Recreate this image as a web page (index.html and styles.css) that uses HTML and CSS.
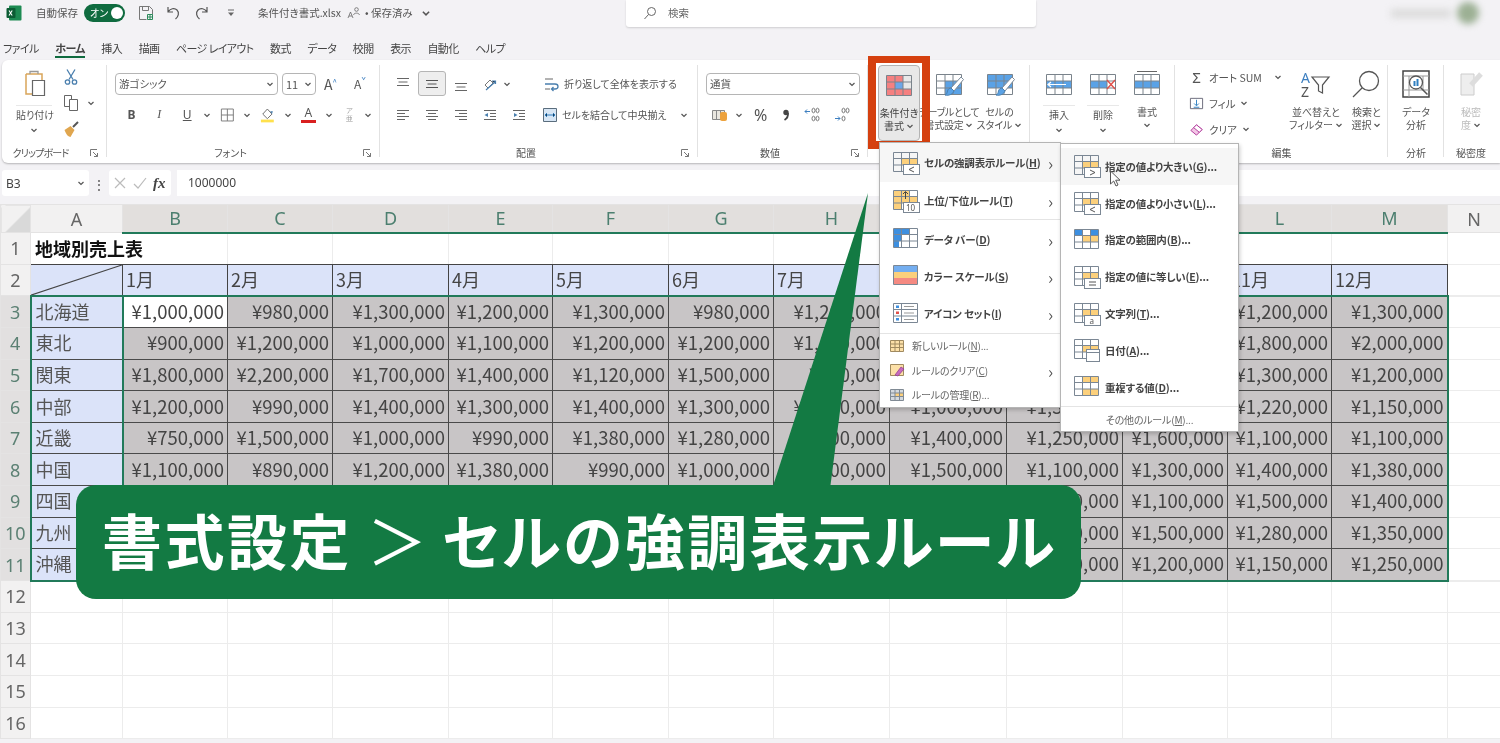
FILE: index.html
```html
<!DOCTYPE html>
<html lang="ja">
<head>
    <meta charset="UTF-8">
    <title>条件付き書式.xlsx - Excel</title>
    <link rel="stylesheet" href="styles.css">
</head>
<body>
<svg class="defs" width="0" height="0">
    <symbol id="mgrid" viewBox="0 0 28 24">
        <path fill="#fcd07c" d="M9 7h17v7H9z"/>
        <path fill="none" stroke="#7b8794" d="M1.500 1.500h24v19h-24zM1.500 7.500h24M1.500 14h24M9.500 1.500v19M17.500 1.500v19"/>
    </symbol>
    <symbol id="sgrid" viewBox="0 0 32 32">
        <path fill="none" stroke="#7a838b" d="M3.500 6.500h25v20h-25zM3.500 13h25M3.500 20h25M12 6.500v20M20 6.500v20"/>
    </symbol>
    <symbol id="brush" viewBox="0 0 32 32">
        <path fill="#fff" stroke="#7a8a9a" d="M18 20L28 9l2.500 2.500L21 23z"/>
        <path fill="#5aa2e6" stroke="#4a7fae" d="M18 20l3 3c-1 3-5 5-9 4 2-1 2-2 2.500-4 .5-2 2-3 3.500-3z"/>
    </symbol>
    <symbol id="chev" viewBox="0 0 8 8">
        <path fill="none" stroke="#555" stroke-width="1.200" d="M1.500 3l2.500 2.500L6.500 3"/>
    </symbol>
    <symbol id="launch" viewBox="0 0 10 10">
        <path fill="none" stroke="#777" d="M1.500 8V1.500H8M4 4l4.500 4.500M5 8.500h3.500V5"/>
    </symbol>
</svg>
<div class="page">
    <!-- Title bar -->
    <div class="titlebar">
        <div class="title-left">
            <svg class="xl-logo" width="16" height="16" viewBox="0 0 16 16"><rect x="3" y="0.500" width="12.500" height="15" rx="1" fill="#1d8a52"/><rect x="0.500" y="3" width="9" height="10" rx="1" fill="#0c5c34"/><path d="M3 5.500l3.200 5M6.200 5.500L3 10.500" stroke="#fff" stroke-width="1.100"/></svg>
            <span class="autosave">自動保存</span>
            <span class="toggle">オン<i class="knob"></i></span>
            <svg class="qat save" width="16" height="16" viewBox="0 0 16 16"><path fill="none" stroke="#777" d="M1.500 1.500h10l3 3v5M1.500 1.500v13h7M4.500 1.500v4h6v-4"/><path fill="none" stroke="#2a8a5a" d="M9.500 9.500h5v5h-5zM12 9.500v5M9.500 12h5"/></svg>
            <svg class="qat undo" width="16" height="16" viewBox="0 0 16 16"><path fill="none" stroke="#555" stroke-width="1.200" d="M3 2v5h5M3.200 6.800C5 3.500 9.500 2.500 12 5c2.500 2.600 1.500 6.500-1.500 9"/></svg>
            <svg class="qat redo" width="16" height="16" viewBox="0 0 16 16"><path fill="none" stroke="#555" stroke-width="1.200" d="M13 2v5H8M12.800 6.800C11 3.500 6.500 2.500 4 5c-2.500 2.600-1.500 6.500 1.500 9"/></svg>
            <svg class="qat more" width="10" height="10" viewBox="0 0 10 10"><path fill="none" stroke="#666" d="M2 2h6"/><path fill="#666" d="M2 4.500h6L5 8z"/></svg>
            <span class="filename">条件付き書式.xlsx</span>
            <svg class="author" width="14" height="14" viewBox="0 0 14 14"><circle cx="9.500" cy="3.500" r="1.800" fill="none" stroke="#666" stroke-width=".8"/><path fill="none" stroke="#666" stroke-width=".8" d="M6.500 9c.5-2.500 5.500-2.500 6 0M1 12l2.500-6L6 12M2 10h3"/></svg>
            <span class="saved">• 保存済み</span>
            <svg class="saved-chev" width="10" height="10" viewBox="0 0 8 8"><use href="#chev"/></svg>
        </div>
        <div class="searchbox">
            <svg width="14" height="14" viewBox="0 0 14 14"><circle cx="8.500" cy="5.500" r="4" fill="none" stroke="#666"/><path stroke="#666" d="M5.500 8.500L1.500 13"/></svg>
            <span>検索</span>
        </div>
        <div class="account"><span class="acc-name"></span><span class="acc-pic"></span></div>
    </div>

    <!-- Tabs -->
    <div class="tabs">
        <span>ファイル</span>
        <span class="tab-on">ホーム</span>
        <span>挿入</span>
        <span>描画</span>
        <span>ページ レイアウト</span>
        <span>数式</span>
        <span>データ</span>
        <span>校閲</span>
        <span>表示</span>
        <span>自動化</span>
        <span>ヘルプ</span>
    </div>

    <!-- Ribbon -->
    <div class="ribbon">
        <section class="group g-clip">
            <div class="group-body">
                <div class="big paste">
                    <svg width="32" height="32" viewBox="0 0 32 32"><path fill="none" stroke="#d9a55a" stroke-width="1.500" d="M8 6h16v6M8 6v20h6"/><path fill="none" stroke="#999" stroke-width="1.300" d="M12 6V3.500h8V6"/><path fill="#fff" stroke="#666" stroke-width="1.200" d="M14.500 12.500h12v15h-12z"/></svg>
                    <span class="split">貼り付け</span>
                    <svg class="chev" viewBox="0 0 8 8"><use href="#chev"/></svg>
                </div>
                <div class="clip-tools">
                    <svg width="16" height="18" viewBox="0 0 16 18"><path fill="none" stroke="#4a7fae" stroke-width="1.300" d="M4 1.500l6 10M12 1.500l-6 10"/><circle cx="4.500" cy="14" r="2.200" fill="none" stroke="#4a7fae" stroke-width="1.300"/><circle cx="11.500" cy="14" r="2.200" fill="none" stroke="#4a7fae" stroke-width="1.300"/></svg>
                    <div class="row-chev">
                        <svg width="16" height="18" viewBox="0 0 16 18"><path fill="none" stroke="#666" d="M1.500 1.500h7v11h-7z"/><path fill="#fff" stroke="#666" d="M6.500 5.500h8v11h-8z"/></svg>
                        <svg class="chev" viewBox="0 0 8 8"><use href="#chev"/></svg>
                    </div>
                    <svg width="18" height="18" viewBox="0 0 18 18"><path fill="#e0a64f" d="M1.500 10l6-4 4 4-4 7c-2-.5-4-1.500-6-7z"/><path stroke="#555" stroke-width="2" d="M10 7l5-5"/></svg>
                </div>
            </div>
            <div class="group-label">クリップボード<svg class="launch" viewBox="0 0 10 10"><use href="#launch"/></svg></div>
        </section>

        <section class="group g-font">
            <div class="group-body rows">
                <div class="tool-row">
                    <div class="select font-name">游ゴシック<svg class="chev" viewBox="0 0 8 8"><use href="#chev"/></svg></div>
                    <div class="select font-size">11<svg class="chev" viewBox="0 0 8 8"><use href="#chev"/></svg></div>
                    <span class="grow">A<sup>^</sup></span>
                    <span class="shrink">A<sup>ˇ</sup></span>
                </div>
                <div class="tool-row fmt">
                    <b class="f-b">B</b>
                    <i class="f-i">I</i>
                    <u class="f-u">U</u>
                    <svg class="chev" viewBox="0 0 8 8"><use href="#chev"/></svg>
                    <svg width="16" height="16" viewBox="0 0 16 16"><path fill="none" stroke="#777" d="M1.500 1.500h13v13h-13zM8 1.500v13M1.500 8h13"/></svg>
                    <svg class="chev" viewBox="0 0 8 8"><use href="#chev"/></svg>
                    <svg width="16" height="16" viewBox="0 0 16 16"><path fill="#fff" stroke="#666" d="M8 1.500L13 7l-5 5-5-5z"/><path fill="#4a7fae" d="M11 4h3l-1 3z"/><path fill="#ffe14d" d="M1 13h14v3H1z"/></svg>
                    <svg class="chev" viewBox="0 0 8 8"><use href="#chev"/></svg>
                    <span class="f-color">A</span>
                    <svg class="chev" viewBox="0 0 8 8"><use href="#chev"/></svg>
                    <span class="f-furi">ア<br>亜</span>
                    <svg class="chev" viewBox="0 0 8 8"><use href="#chev"/></svg>
                </div>
            </div>
            <div class="group-label">フォント<svg class="launch" viewBox="0 0 10 10"><use href="#launch"/></svg></div>
        </section>

        <section class="group g-align">
            <div class="group-body rows">
                <div class="tool-row">
                    <svg class="line-ic" viewBox="0 0 16 16"><path stroke="#666" d="M2 2.500h12M3.500 6h9M2 9.500h12"/></svg>
                    <span class="line-on"><svg class="line-ic" viewBox="0 0 16 16"><path stroke="#555" d="M2 4.500h12M3.500 8h9M2 11.500h12"/></svg></span>
                    <svg class="line-ic" viewBox="0 0 16 16"><path stroke="#666" d="M2 7.500h12M3.500 11h9M2 14.500h12"/></svg>
                    <svg class="line-ic orient" viewBox="0 0 16 16"><path fill="none" stroke="#777" d="M3 9l5-5 3 3-5 5z"/><path stroke="#4a7fae" stroke-width="1.200" d="M4 14l9-8M10 5h3.500v3"/></svg>
                    <svg class="chev" viewBox="0 0 8 8"><use href="#chev"/></svg>
                    <svg class="wrap-ic" width="16" height="16" viewBox="0 0 16 16"><path fill="none" stroke="#666" d="M1 3h8M1 13h5"/><path fill="none" stroke="#4a7fae" stroke-width="1.300" d="M1 8h10c4 0 4 5 0 5H8M9.500 11L7.500 13l2 2"/></svg>
                    <span class="al-text">折り返して全体を表示する</span>
                </div>
                <div class="tool-row">
                    <svg class="line-ic" viewBox="0 0 16 16"><path stroke="#666" d="M2 3.500h12M2 6.500h8M2 9.500h12M2 12.500h8"/></svg>
                    <svg class="line-ic" viewBox="0 0 16 16"><path stroke="#666" d="M2 3.500h12M4 6.500h8M2 9.500h12M4 12.500h8"/></svg>
                    <svg class="line-ic" viewBox="0 0 16 16"><path stroke="#666" d="M2 3.500h12M6 6.500h8M2 9.500h12M6 12.500h8"/></svg>
                    <svg class="line-ic" viewBox="0 0 16 16"><path stroke="#666" d="M2 3.500h12M8 6.500h6M8 9.500h6M2 12.500h12"/><path fill="#4a7fae" d="M6 6v4L2.500 8z"/></svg>
                    <svg class="line-ic" viewBox="0 0 16 16"><path stroke="#666" d="M2 3.500h12M8 6.500h6M8 9.500h6M2 12.500h12"/><path fill="#4a7fae" d="M3 6v4l3.500-2z"/></svg>
                    <svg class="wrap-ic merge" width="16" height="16" viewBox="0 0 16 16"><path fill="#d7e6f5" stroke="#5a6d7d" d="M1.500 1.500h13v13h-13z"/><path stroke="#2f7fc0" d="M3 8h10M5 6L3 8l2 2M11 6l2 2-2 2"/></svg>
                    <span class="al-text">セルを結合して中央揃え</span>
                    <svg class="chev merge-chev" viewBox="0 0 8 8"><use href="#chev"/></svg>
                </div>
            </div>
            <div class="group-label">配置<svg class="launch" viewBox="0 0 10 10"><use href="#launch"/></svg></div>
        </section>

        <section class="group g-num">
            <div class="group-body rows">
                <div class="tool-row">
                    <div class="select num-format">通貨<svg class="chev" viewBox="0 0 8 8"><use href="#chev"/></svg></div>
                </div>
                <div class="tool-row num-tools">
                    <svg width="18" height="16" viewBox="0 0 18 16"><path fill="#e9e6df" stroke="#888" d="M1.500 3.500h12v9h-12z"/><path stroke="#888" d="M5.500 3.500v9M9.500 3.500v9"/><rect x="9" y="5" width="7" height="9" rx="2" fill="#eda23d"/></svg>
                    <svg class="chev" viewBox="0 0 8 8"><use href="#chev"/></svg>
                    <span class="pct">%</span>
                    <svg class="comma" width="10" height="14" viewBox="0 0 10 14"><circle cx="5" cy="4.500" r="2.700" fill="#444"/><path fill="none" stroke="#444" stroke-width="1.800" d="M7 5c.3 3-1 5.500-3.500 7"/></svg>
                    <svg class="dec" width="17" height="16" viewBox="0 0 17 16"><path fill="none" stroke="#3d7fc0" d="M6 4.500H1M3 2.500l-2 2 2 2"/><ellipse cx="9.500" cy="3.500" rx="1.500" ry="2.300" fill="none" stroke="#777"/><ellipse cx="13.500" cy="3.500" rx="1.500" ry="2.300" fill="none" stroke="#777"/><ellipse cx="9.500" cy="11.500" rx="1.500" ry="2.300" fill="none" stroke="#777"/><ellipse cx="13.500" cy="11.500" rx="1.500" ry="2.300" fill="none" stroke="#777"/></svg>
                    <svg class="dec" width="17" height="16" viewBox="0 0 17 16"><ellipse cx="9.500" cy="3.500" rx="1.500" ry="2.300" fill="none" stroke="#777"/><ellipse cx="13.500" cy="3.500" rx="1.500" ry="2.300" fill="none" stroke="#777"/><ellipse cx="9.500" cy="11.500" rx="1.500" ry="2.300" fill="none" stroke="#777"/><path fill="none" stroke="#3d7fc0" d="M1 11.500h5M4 9.500l2 2-2 2"/></svg>
                </div>
            </div>
            <div class="group-label">数値<svg class="launch" viewBox="0 0 10 10"><use href="#launch"/></svg></div>
        </section>

        <section class="group g-style">
            <div class="group-body">
                <div class="big cond">
                    <svg width="32" height="32" viewBox="0 0 32 32"><path fill="#f58080" d="M3.500 6.500H20V13H3.500zM3.500 20h25v6.500h-25zM3.500 13H12v7H3.500z"/><path fill="#6da6e8" d="M12 13h8v7h-8z"/><use href="#sgrid" width="32" height="32"/></svg>
                    <span>条件付き</span>
                    <span>書式<svg class="chev" viewBox="0 0 8 8"><use href="#chev"/></svg></span>
                </div>
                <div class="big tbl">
                    <svg width="32" height="32" viewBox="0 0 32 32"><path fill="#5aa2e6" d="M12 13h16.500v13.500H12z"/><use href="#sgrid" width="32" height="32"/><use href="#brush" width="32" height="32"/></svg>
                    <span>テーブルとして</span>
                    <span>書式設定<svg class="chev" viewBox="0 0 8 8"><use href="#chev"/></svg></span>
                </div>
                <div class="big cstyle">
                    <svg width="32" height="32" viewBox="0 0 32 32"><path fill="#5aa2e6" d="M3.500 6.500h25V20h-25z"/><use href="#sgrid" width="32" height="32"/><use href="#brush" width="32" height="32"/></svg>
                    <span>セルの</span>
                    <span>スタイル<svg class="chev" viewBox="0 0 8 8"><use href="#chev"/></svg></span>
                </div>
            </div>
            <div class="group-label"></div>
        </section>

        <section class="group g-cell">
            <div class="group-body">
                <div class="big low">
                    <svg width="32" height="32" viewBox="0 0 32 32"><path fill="#5aa2e6" d="M3.500 13h25v7h-25z"/><use href="#sgrid" width="32" height="32"/><path fill="none" stroke="#fff" stroke-width="1.200" d="M5 16.500h18M8 14l-3 2.500L8 19"/></svg>
                    <span class="split">挿入</span>
                    <svg class="chev" viewBox="0 0 8 8"><use href="#chev"/></svg>
                </div>
                <div class="big low">
                    <svg width="32" height="32" viewBox="0 0 32 32"><path fill="#5aa2e6" d="M3.500 13H20v7H3.500z"/><use href="#sgrid" width="32" height="32"/><path fill="none" stroke="#e0504a" stroke-width="1.400" d="M20 12l8 9M28 12l-8 9"/></svg>
                    <span class="split">削除</span>
                    <svg class="chev" viewBox="0 0 8 8"><use href="#chev"/></svg>
                </div>
                <div class="big">
                    <svg width="32" height="32" viewBox="0 0 32 32"><path fill="#5aa2e6" d="M3.500 13h25v7h-25z"/><use href="#sgrid" width="32" height="32"/><path stroke="#666" d="M6 3.500h20"/></svg>
                    <span>書式</span>
                    <svg class="chev" viewBox="0 0 8 8"><use href="#chev"/></svg>
                </div>
            </div>
            <div class="group-label"></div>
        </section>

        <section class="group g-edit">
            <div class="group-body">
                <div class="edit-list">
                    <div class="edit-row"><span class="edit-ic sigma">Σ</span>オート SUM<svg class="chev sum-chev" viewBox="0 0 8 8"><use href="#chev"/></svg></div>
                    <div class="edit-row"><svg class="edit-ic" viewBox="0 0 16 16"><path fill="#fff" stroke="#667" d="M1.500 2.500h13v11h-13z"/><path stroke="#2f7fc0" fill="none" d="M8 4v6M5.500 8L8 10.500 10.500 8M5 12h6"/></svg>フィル<svg class="chev" viewBox="0 0 8 8"><use href="#chev"/></svg></div>
                    <div class="edit-row"><svg class="edit-ic" viewBox="0 0 16 16"><path fill="#f3c6e6" stroke="#b0389a" d="M2 9l6-6 6 5-6 6z"/><path fill="#fff" stroke="#b0389a" d="M8 3l6 5-3 3-6-5z"/></svg>クリア<svg class="chev" viewBox="0 0 8 8"><use href="#chev"/></svg></div>
                </div>
                <div class="big sort">
                    <svg width="32" height="32" viewBox="0 0 32 32"><text x="1" y="15" class="az az-a">A</text><text x="1" y="29" class="az">Z</text><path fill="none" stroke="#555" stroke-width="1.200" d="M12 9h17l-6.500 8v8l-4-2v-6z"/></svg>
                    <span>並べ替えと</span>
                    <span>フィルター<svg class="chev" viewBox="0 0 8 8"><use href="#chev"/></svg></span>
                </div>
                <div class="big find">
                    <svg width="32" height="32" viewBox="0 0 32 32"><circle cx="19" cy="13" r="9.500" fill="none" stroke="#555" stroke-width="1.300"/><path stroke="#555" stroke-width="1.300" d="M12 20L3 29"/></svg>
                    <span>検索と</span>
                    <span>選択<svg class="chev" viewBox="0 0 8 8"><use href="#chev"/></svg></span>
                </div>
            </div>
            <div class="group-label">編集</div>
        </section>

        <section class="group g-ana">
            <div class="group-body">
                <div class="big">
                    <svg width="32" height="32" viewBox="0 0 32 32"><path fill="none" stroke="#444" stroke-width="1.500" d="M3 3h26v26H3z"/><path fill="none" stroke="#999" d="M3 8h26M3 22h26M9 8v21M23 8v14"/><circle cx="16" cy="14.500" r="6.500" fill="#fff" stroke="#555" stroke-width="1.300"/><path fill="#2f7fc0" d="M13.500 13h2v5h-2zM16.500 11h2v7h-2z"/><path stroke="#555" stroke-width="1.500" d="M20.500 19.500l7 7"/></svg>
                    <span>データ</span>
                    <span>分析</span>
                </div>
            </div>
            <div class="group-label">分析</div>
        </section>

        <section class="group g-sec">
            <div class="group-body">
                <div class="big off">
                    <svg width="32" height="32" viewBox="0 0 32 32"><path fill="#eee" stroke="#ccc" d="M6 6h13v21H6z"/><path stroke="#ddd" stroke-width="5" d="M16 17l10-11"/></svg>
                    <span>秘密</span>
                    <span>度<svg class="chev" viewBox="0 0 8 8"><use href="#chev"/></svg></span>
                </div>
            </div>
            <div class="group-label">秘密度</div>
        </section>
    </div>

    <!-- Formula bar -->
    <div class="formula">
        <div class="namebox">B3<svg class="chev" viewBox="0 0 8 8"><use href="#chev"/></svg></div>
        <span class="dots">⋮</span>
        <div class="fx-box">
            <svg width="14" height="14" viewBox="0 0 14 14"><path stroke="#bbb" stroke-width="1.200" d="M2 2l10 10M12 2L2 12"/></svg>
            <svg width="14" height="14" viewBox="0 0 14 14"><path fill="none" stroke="#bbb" stroke-width="1.200" d="M1 8l4 4 8-10"/></svg>
            <i class="fx">fx</i>
        </div>
        <div class="fx-input">1000000</div>
    </div>

    <!-- Sheet -->
    <div class="sheet">
        <table>
            <colgroup>
                <col class="c30"><col class="c92"><col class="c105"><col class="c105"><col class="c116"><col class="c104"><col class="c116"><col class="c105"><col class="c116"><col class="c117"><col class="c116"><col class="c105"><col class="c104"><col class="c116"><col class="c53">
            </colgroup>
            <tr class="head">
                <th class="corner"></th><th>A</th><th class="hs">B</th><th class="hs">C</th><th class="hs">D</th><th class="hs">E</th><th class="hs">F</th><th class="hs">G</th><th class="hs">H</th><th class="hs">I</th><th class="hs">J</th><th class="hs">K</th><th class="hs">L</th><th class="hs">M</th><th>N</th>
            </tr>
            <tr class="row1">
                <th>1</th><td class="title" colspan="2">地域別売上表</td><td></td><td></td><td></td><td></td><td></td><td></td><td></td><td></td><td></td><td></td><td></td><td class="plain"></td>
            </tr>
            <tr class="months">
                <th>2</th><td class="diag"><svg width="92" height="32" preserveAspectRatio="none" viewBox="0 0 92 32"><path stroke="#444" stroke-width="1.200" d="M0 32L92 0"/></svg></td><td>1月</td><td>2月</td><td>3月</td><td>4月</td><td>5月</td><td>6月</td><td>7月</td><td></td><td></td><td></td><td>11月</td><td>12月</td><td class="plain"></td>
            </tr>
            <tr class="data first">
                <th>3</th><td class="area">北海道</td><td class="active">¥1,000,000</td><td>¥980,000</td><td>¥1,300,000</td><td>¥1,200,000</td><td>¥1,300,000</td><td>¥980,000</td><td>¥1,200,000</td><td></td><td></td><td></td><td>¥1,200,000</td><td>¥1,300,000</td><td class="plain"></td>
            </tr>
            <tr class="data">
                <th>4</th><td class="area">東北</td><td>¥900,000</td><td>¥1,200,000</td><td>¥1,000,000</td><td>¥1,100,000</td><td>¥1,200,000</td><td>¥1,200,000</td><td>¥1,100,000</td><td></td><td></td><td></td><td>¥1,800,000</td><td>¥2,000,000</td><td class="plain"></td>
            </tr>
            <tr class="data">
                <th>5</th><td class="area">関東</td><td>¥1,800,000</td><td>¥2,200,000</td><td>¥1,700,000</td><td>¥1,400,000</td><td>¥1,120,000</td><td>¥1,500,000</td><td>¥780,000</td><td></td><td></td><td></td><td>¥1,300,000</td><td>¥1,200,000</td><td class="plain"></td>
            </tr>
            <tr class="data">
                <th>6</th><td class="area">中部</td><td>¥1,200,000</td><td>¥990,000</td><td>¥1,400,000</td><td>¥1,300,000</td><td>¥1,400,000</td><td>¥1,300,000</td><td>¥1,300,000</td><td>¥1,000,000</td><td>¥1,300,000</td><td></td><td>¥1,220,000</td><td>¥1,150,000</td><td class="plain"></td>
            </tr>
            <tr class="data">
                <th>7</th><td class="area">近畿</td><td>¥750,000</td><td>¥1,500,000</td><td>¥1,000,000</td><td>¥990,000</td><td>¥1,380,000</td><td>¥1,280,000</td><td>¥1,200,000</td><td>¥1,400,000</td><td>¥1,250,000</td><td>¥1,600,000</td><td>¥1,100,000</td><td>¥1,100,000</td><td class="plain"></td>
            </tr>
            <tr class="data">
                <th>8</th><td class="area">中国</td><td>¥1,100,000</td><td>¥890,000</td><td>¥1,200,000</td><td>¥1,380,000</td><td>¥990,000</td><td>¥1,000,000</td><td>¥1,300,000</td><td>¥1,500,000</td><td>¥1,100,000</td><td>¥1,300,000</td><td>¥1,400,000</td><td>¥1,380,000</td><td class="plain"></td>
            </tr>
            <tr class="data">
                <th>9</th><td class="area">四国</td><td></td><td></td><td></td><td></td><td></td><td></td><td></td><td></td><td>¥1,200,000</td><td>¥1,100,000</td><td>¥1,500,000</td><td>¥1,400,000</td><td class="plain"></td>
            </tr>
            <tr class="data">
                <th>10</th><td class="area">九州</td><td></td><td></td><td></td><td></td><td></td><td></td><td></td><td></td><td>¥1,300,000</td><td>¥1,500,000</td><td>¥1,280,000</td><td>¥1,350,000</td><td class="plain"></td>
            </tr>
            <tr class="data last">
                <th>11</th><td class="area">沖縄</td><td></td><td></td><td></td><td></td><td></td><td></td><td></td><td></td><td>¥1,200,000</td><td>¥1,200,000</td><td>¥1,150,000</td><td>¥1,250,000</td><td class="plain"></td>
            </tr>
            <tr><th>12</th><td></td><td></td><td></td><td></td><td></td><td></td><td></td><td></td><td></td><td></td><td></td><td></td><td></td><td></td></tr>
            <tr><th>13</th><td></td><td></td><td></td><td></td><td></td><td></td><td></td><td></td><td></td><td></td><td></td><td></td><td></td><td></td></tr>
            <tr><th>14</th><td></td><td></td><td></td><td></td><td></td><td></td><td></td><td></td><td></td><td></td><td></td><td></td><td></td><td></td></tr>
            <tr><th>15</th><td></td><td></td><td></td><td></td><td></td><td></td><td></td><td></td><td></td><td></td><td></td><td></td><td></td><td></td></tr>
            <tr><th>16</th><td></td><td></td><td></td><td></td><td></td><td></td><td></td><td></td><td></td><td></td><td></td><td></td><td></td><td></td></tr>
        </table>
    </div>

    <!-- Red highlight around the button -->
    <div class="red-box"></div>

    <!-- Conditional formatting menu -->
    <div class="menu menu-main">
        <div class="m-item tall hover">
            <svg class="m-ic" viewBox="0 0 28 24"><use href="#mgrid"/><rect x="11.500" y="13.500" width="16" height="10" fill="#fff" stroke="#7b8794"/><path fill="none" stroke="#555" d="M22 16l-5 2.500 5 2.500"/></svg>
            <span>セルの強調表示ルール(<u>H</u>)</span><b class="arrow">›</b>
        </div>
        <div class="m-item tall">
            <svg class="m-ic" viewBox="0 0 28 24"><path fill="#fcd07c" d="M2 2h8v18H2zM10 2h8v6h-8z"/><use href="#mgrid"/><rect x="11.500" y="13.500" width="16" height="10" fill="#fff" stroke="#7b8794"/><text x="14" y="21.500" class="m-num">10</text><path fill="none" stroke="#444" d="M13.500 10V3M11 5l2.500-2.500L16 5"/></svg>
            <span>上位/下位ルール(<u>T</u>)</span><b class="arrow">›</b>
        </div>
        <div class="m-sep inset"></div>
        <div class="m-item tall">
            <svg class="m-ic" viewBox="0 0 28 24"><path fill="#3d8fe0" d="M2 2h15v6H2zM2 8h8v6H2zM2 14h5v7H2z"/><path fill="none" stroke="#7b8794" d="M1.500 1.500h24v19h-24zM1.500 7.500h24M1.500 14h24M9.500 1.500v19M17.500 1.500v19"/></svg>
            <span>データ バー(<u>D</u>)</span><b class="arrow">›</b>
        </div>
        <div class="m-item tall">
            <svg class="m-ic" viewBox="0 0 28 24"><path fill="#74aef0" d="M2 2h23v6H2z"/><path fill="#fcd07c" d="M2 8h23v6H2z"/><path fill="#f58a82" d="M2 14h23v7H2z"/><path fill="none" stroke="#7b8794" d="M1.500 1.500h24v19h-24z"/></svg>
            <span>カラー スケール(<u>S</u>)</span><b class="arrow">›</b>
        </div>
        <div class="m-item tall">
            <svg class="m-ic" viewBox="0 0 28 24"><path fill="none" stroke="#7b8794" d="M1.500 1.500h24v19h-24zM1.500 7.500h24M1.500 14h24M9.500 1.500v19"/><path fill="#3d8fe0" d="M4 3.500h3V6H4zM4 16h3v2.500H4z"/><path fill="#e0504a" d="M4 9.500h3V12H4z"/><path stroke="#999" d="M12 4.500h10M12 11h10M12 17.500h10"/></svg>
            <span>アイコン セット(<u>I</u>)</span><b class="arrow">›</b>
        </div>
        <div class="m-sep"></div>
        <div class="m-item small">
            <svg class="s-ic" viewBox="0 0 16 14"><path fill="#fce0a8" stroke="#a08a60" d="M1.500 1.500h13v11h-13z"/><path stroke="#a08a60" d="M1.500 5h13M1.500 8.500h13M6 1.500v11M10.500 1.500v11"/></svg>
            <span>新しいルール(<u>N</u>)...</span>
        </div>
        <div class="m-item small">
            <svg class="s-ic" viewBox="0 0 16 14"><path fill="#fce0a8" stroke="#a08a60" d="M1.500 1.500h13v11h-13z"/><path fill="#c76ac0" stroke="#8b3a8b" stroke-width=".7" d="M6 12l6-8 3 2-6 7z"/></svg>
            <span>ルールのクリア(<u>C</u>)</span><b class="arrow">›</b>
        </div>
        <div class="m-item small">
            <svg class="s-ic" viewBox="0 0 16 14"><path fill="#d3d9df" stroke="#808a94" d="M1.500 1.500h13v11h-13z"/><path fill="#fcd07c" d="M6 5h8v4H6z"/><path stroke="#808a94" d="M1.500 5h13M1.500 8.500h13M6 1.500v11M10.500 1.500v11"/></svg>
            <span>ルールの管理(<u>R</u>)...</span>
        </div>
    </div>

    <!-- Highlight rules submenu -->
    <div class="menu menu-sub">
        <div class="m-item sub hover">
            <svg class="m-ic" viewBox="0 0 28 24"><use href="#mgrid"/><rect x="11.500" y="13.500" width="16" height="10" fill="#fff" stroke="#7b8794"/><path fill="none" stroke="#555" d="M17 16l5 2.500-5 2.500"/></svg>
            <span>指定の値より大きい(<u>G</u>)...</span>
        </div>
        <div class="m-item sub">
            <svg class="m-ic" viewBox="0 0 28 24"><use href="#mgrid"/><rect x="11.500" y="13.500" width="16" height="10" fill="#fff" stroke="#7b8794"/><path fill="none" stroke="#555" d="M22 16l-5 2.500 5 2.500"/></svg>
            <span>指定の値より小さい(<u>L</u>)...</span>
        </div>
        <div class="m-item sub">
            <svg class="m-ic" viewBox="0 0 28 24"><path fill="#3d8fe0" d="M2 2h7v5H2zM18 2h7v5h-7z"/><path fill="#fcd07c" d="M9 7h16v7H9z"/><path fill="none" stroke="#7b8794" d="M1.500 1.500h24v19h-24zM1.500 7.500h24M1.500 14h24M9.500 1.500v19M17.500 1.500v19"/></svg>
            <span>指定の範囲内(<u>B</u>)...</span>
        </div>
        <div class="m-item sub">
            <svg class="m-ic" viewBox="0 0 28 24"><use href="#mgrid"/><rect x="11.500" y="13.500" width="16" height="10" fill="#fff" stroke="#7b8794"/><path stroke="#555" d="M16 17h7M16 20h7"/></svg>
            <span>指定の値に等しい(<u>E</u>)...</span>
        </div>
        <div class="m-item sub">
            <svg class="m-ic" viewBox="0 0 28 24"><use href="#mgrid"/><rect x="11.500" y="13.500" width="16" height="10" fill="#fff" stroke="#7b8794"/><text x="16.500" y="22" class="m-num">a</text></svg>
            <span>文字列(<u>T</u>)...</span>
        </div>
        <div class="m-item sub">
            <svg class="m-ic" viewBox="0 0 28 24"><use href="#mgrid"/><rect x="13.500" y="11.500" width="13" height="12" fill="#fff" stroke="#7b8794"/><path stroke="#7b8794" d="M13.500 14.500h13"/></svg>
            <span>日付(<u>A</u>)...</span>
        </div>
        <div class="m-item sub">
            <svg class="m-ic" viewBox="0 0 28 24"><path fill="#fcd07c" d="M9 2h16v5.500H9zM9 14h16v6.500H9z"/><path fill="none" stroke="#7b8794" d="M1.500 1.500h24v19h-24zM1.500 7.500h24M1.500 14h24M9.500 1.500v19M17.500 1.500v19"/></svg>
            <span>重複する値(<u>D</u>)...</span>
        </div>
        <div class="m-sep"></div>
        <div class="m-more">その他のルール(<u>M</u>)...</div>
        <svg class="cursor" width="14" height="18" viewBox="0 0 14 18"><path fill="#fff" stroke="#555" d="M1.500 1v13l3.200-3 2.300 5 2-1-2.300-4.800H11z"/></svg>
    </div>

    <!-- Callout -->
    <svg class="pointer" width="110" height="310" viewBox="0 0 110 310"><path fill="#137a43" d="M106 0L10 296h58z"/></svg>
    <div class="callout">書式設定<span class="gt">＞</span>セルの強調表示ルール</div>
</div>
</body>
</html>
```
FILE: styles.css
```css
* {
    margin: 0;
    padding: 0;
    box-sizing: border-box;
}

body {
    margin: 0;
    overflow: hidden;
    font-family: "Noto Sans CJK JP", "Noto Sans", sans-serif;
    font-feature-settings: "palt";
    color: #444;
    background: #f3f2f5;
}

.defs {
    position: absolute;
}

.page {
    position: relative;
    width: 1500px;
    height: 743px;
    overflow: hidden;
    background: #f3f2f5;
    filter: blur(0.45px);
}

.chev {
    width: 8px;
    height: 8px;
    flex: none;
}

/* Title bar */
.titlebar {
    display: flex;
    height: 28px;
}

.title-left {
    display: flex;
    align-items: center;
    width: 626px;
    padding: 0 0 3px 6px;
    font-size: 10.5px;
    color: #555;
}

.autosave {
    margin-left: 14px;
    width: 42px;
}

.toggle {
    position: relative;
    display: flex;
    align-items: center;
    width: 41px;
    height: 18px;
    margin-left: 6px;
    padding-left: 6px;
    border-radius: 9px;
    background: #0f6b3f;
    color: #fff;
    font-size: 10px;
}

.knob {
    position: absolute;
    right: 2px;
    top: 3px;
    width: 12px;
    height: 12px;
    border-radius: 50%;
    background: #fff;
}

.save { margin-left: 13px; }
.undo { margin-left: 11px; }
.redo { margin-left: 13px; }
.more { margin-left: 16px; }

.filename {
    margin-left: 22px;
}

.author {
    margin-left: 6px;
}

.saved {
    margin-left: 4px;
    width: 54px;
}

.saved-chev {
    margin-left: 2px;
}

.searchbox {
    display: flex;
    align-items: center;
    gap: 11px;
    width: 410px;
    height: 27px;
    padding: 0 0 2px 17px;
    background: #fff;
    border-radius: 0 0 3px 3px;
    box-shadow: 0 1px 2px rgba(0, 0, 0, 0.15);
    font-size: 10.5px;
    color: #666;
}

.account {
    display: flex;
    flex: 1;
    align-items: center;
    justify-content: flex-end;
    gap: 6px;
    padding: 0 21px 2px 0;
    filter: blur(3.5px);
}

.acc-name {
    width: 60px;
    height: 9px;
    background: #dcdcdc;
}

.acc-pic {
    width: 22px;
    height: 22px;
    border-radius: 50%;
    background: #9cb094;
}

/* Tabs */
.tabs {
    display: flex;
    gap: 16.5px;
    height: 32px;
    padding: 12px 0 0 3px;
    font-size: 11px;
    letter-spacing: -0.6px;
    color: #444;
}

.tabs span {
    height: 18px;
    line-height: 16px;
}

.tab-on {
    font-weight: 700;
    border-bottom: 2px solid #0f6b3f;
}

/* Ribbon */
.ribbon {
    display: flex;
    height: 103px;
    margin-left: 2px;
    background: #fff;
    border-radius: 6px 0 0 6px;
    box-shadow: 0 1px 2px rgba(0, 0, 0, 0.25);
    font-size: 10px;
    color: #555;
}

.group {
    position: relative;
    display: flex;
    flex-direction: column;
}

.group::after {
    content: '';
    position: absolute;
    right: 0;
    top: 5px;
    bottom: 6px;
    width: 1px;
    background: #e2e2e2;
}

.g-clip { width: 105px; }
.g-font { width: 273px; }
.g-align { width: 318px; }
.g-num { width: 170px; }
.g-style { width: 162px; }
.g-cell { width: 145px; }
.g-edit { width: 213px; }
.g-ana { width: 56px; }
.g-sec { width: 54px; }
.g-sec::after { display: none; }

.group-body {
    display: flex;
    flex: 1;
}

.group-body.rows {
    flex-direction: column;
}

.group-label {
    position: relative;
    height: 20px;
    line-height: 20px;
    text-align: center;
    font-size: 10px;
    color: #555;
}

.g-font .group-label,
.g-align .group-label,
.g-num .group-label {
    padding-right: 26px;
}

.g-clip .group-label {
    padding-right: 28px;
    letter-spacing: -0.8px;
}

.launch {
    position: absolute;
    right: 8px;
    top: 5px;
    width: 10px;
    height: 10px;
}

.big {
    display: flex;
    flex-direction: column;
    align-items: center;
    padding-top: 8px;
    line-height: 13px;
    white-space: nowrap;
}

.big > svg:first-child {
    margin-bottom: 5px;
}

.big .chev {
    margin-left: 2px;
}

.big > .chev {
    margin: 3px 0 0;
}

.split {
    width: 32px;
    padding-top: 2px;
    border-top: 1px solid #e8e8e8;
    text-align: center;
}

/* Clipboard */
.paste {
    width: 52px;
    margin-left: 6px;
}

.paste > .chev {
    margin-top: 5px;
}

.paste .split {
    width: 36px;
}

.clip-tools {
    display: flex;
    flex-direction: column;
    gap: 8px;
    padding: 8px 0 0 3px;
}

.row-chev {
    display: flex;
    align-items: center;
    gap: 8px;
}

/* Font */
.tool-row {
    display: flex;
    align-items: center;
    height: 31px;
}

.rows {
    padding: 8px 8px 0;
}

.select {
    display: flex;
    align-items: center;
    justify-content: space-between;
    height: 22px;
    padding: 0 3px 0 3px;
    border: 1px solid #b5b5b5;
    border-radius: 4px;
    font-size: 10.5px;
    color: #555;
}

.font-name { width: 163px; }

.font-size {
    width: 34px;
    margin-left: 4px;
    font-size: 11px;
}

.grow, .shrink {
    font-size: 14px;
    color: #555;
}

.grow { margin-left: 8px; }
.shrink { margin-left: 17px; font-size: 12px; }

.grow sup, .shrink sup {
    font-size: 8px;
    color: #3d7fc0;
    vertical-align: 5px;
    line-height: 0;
}

.fmt {
    gap: 9px;
    padding-left: 10px;
    font-family: "Noto Sans", sans-serif;
    font-size: 12px;
}

.f-b, .f-i, .f-u {
    width: 14px;
    text-align: center;
}

.f-i { margin-left: 6px; font-family: "Liberation Serif", serif; }
.f-u { margin-left: 6px; }

.f-color {
    width: 16px;
    line-height: 14px;
    text-align: center;
    font-size: 12px;
    border-bottom: 3px solid #d92020;
}

.f-furi {
    margin-left: 4px;
    width: 10px;
    font-size: 7px;
    line-height: 8px;
    color: #999;
}

/* Alignment */
.line-ic {
    width: 16px;
    height: 16px;
    margin-right: 13px;
    flex: none;
}

.g-align .tool-row {
    padding-left: 7px;
}

.line-on {
    display: flex;
    align-items: center;
    justify-content: center;
    width: 28px;
    height: 25px;
    margin: 0 7px 0 -6px;
    border: 1px solid #b5b5b5;
    border-radius: 3px;
    background: #eeeeee;
}

.line-on .line-ic {
    margin: 0;
}

.orient {
    margin-right: 5px;
}

.wrap-ic {
    margin-left: 33px;
    flex: none;
}

.merge {
    margin-left: 2px;
}

.al-text {
    margin-left: 4px;
    font-size: 10px;
    white-space: nowrap;
}

.merge-chev {
    margin-left: 13px;
}

/* Number */
.num-format {
    width: 157px;
}

.num-tools {
    padding-left: 5px;
}

.num-tools .chev {
    margin-left: 6px;
}

.pct {
    margin-left: 11px;
    font-size: 16px;
    font-family: "Noto Sans", sans-serif;
}

.comma {
    margin-left: 14px;
}

.dec {
    margin-left: 13px;
    flex: none;
}

/* Styles */
.cond {
    position: relative;
    z-index: 1;
    width: 42px;
    height: 76px;
    margin: 5px 0 0 10px;
    padding-top: 3px;
    background: #e8e8e8;
    border: 1px solid #b3b3b3;
    border-radius: 4px;
    color: #444;
}

.tbl {
    width: 58px;
    letter-spacing: -0.3px;
}

.cstyle {
    width: 45px;
    margin-left: -1px;
}

/* Cells */
.g-cell .group-body {
    padding-left: 7px;
}

.g-cell .big {
    width: 44px;
}

.low > .chev {
    margin-top: 5px;
}

/* Editing */
.edit-list {
    width: 116px;
    padding: 4px 0 0 14px;
    font-size: 10.5px;
}

.edit-row {
    display: flex;
    align-items: center;
    gap: 5px;
    height: 26px;
}

.edit-ic {
    width: 15px;
    height: 15px;
    flex: none;
}

.sigma {
    font-size: 15px;
    line-height: 15px;
    font-family: "Noto Sans", sans-serif;
    text-align: center;
}

.sum-chev {
    margin-left: 7px;
}

.az {
    font-family: "Noto Sans", sans-serif;
    font-size: 14px;
    fill: #555;
}

.az-a {
    fill: #3d7fc0;
}

.sort {
    width: 54px;
}

.find {
    width: 44px;
    margin-left: 2px;
}

.g-ana .big, .g-sec .big {
    width: 100%;
}

.off {
    color: #bbb;
}

/* Formula bar */
.formula {
    display: flex;
    align-items: center;
    height: 26px;
    margin-top: 7px;
    padding-left: 2px;
    font-size: 12px;
}

.namebox {
    display: flex;
    align-items: center;
    justify-content: space-between;
    width: 87px;
    height: 26px;
    padding: 0 4px;
    background: #fff;
    border-radius: 3px;
    font-family: "Noto Sans", sans-serif;
}

.dots {
    width: 20px;
    text-align: center;
    color: #444;
}

.fx-box {
    display: flex;
    align-items: center;
    gap: 6px;
    width: 62px;
    height: 26px;
    padding-left: 4px;
    background: #fff;
    border-radius: 3px;
}

.fx {
    font-family: "Liberation Serif", serif;
    font-size: 15px;
    font-weight: 700;
    color: #444;
}

.fx-input {
    flex: 1;
    height: 26px;
    margin-left: 6px;
    padding-left: 11px;
    line-height: 25px;
    background: #fff;
    font-family: "Noto Sans", sans-serif;
}

/* Sheet */
.sheet {
    margin-top: 8px;
}

table {
    width: 1500px;
    table-layout: fixed;
    border-collapse: collapse;
    background: #fff;
}

.c30 { width: 30px; }
.c92 { width: 92px; }
.c105 { width: 105px; }
.c116 { width: 116px; }
.c104 { width: 104px; }
.c117 { width: 117px; }
.c53 { width: 53px; }

tr {
    height: 31.65px;
}

tr.head {
    height: 28px;
}

th {
    background: #f2f1f1;
    border: 1px solid #e4e3e3;
    font-size: 18px;
    font-weight: 400;
    color: #666;
    font-family: "Noto Sans", sans-serif;
    overflow: hidden;
}

td {
    border: 1px solid #ececec;
    font-size: 18.5px;
    line-height: 20px;
    white-space: nowrap;
    color: #444;
    padding: 0 3px 2px;
    overflow: hidden;
}

.corner {
    background: linear-gradient(135deg, #f2f1f1 55%, #d9d9d9 55%);
}

.hs {
    background: #e2dfdd;
    color: #4c7f6f;
    border-bottom: 2px solid #217a5a;
}

.row1 td {
    border-bottom-color: #444;
}

.row1 td.plain {
    border-bottom-color: #ececec;
}

.title {
    font-size: 18px;
    font-weight: 700;
    color: #111;
    padding-left: 4px;
}

.months td {
    background: #dbe3f9;
    border: 1px solid #444;
    padding-top: 0;
    font-size: 18px;
}

.months td.plain {
    background: #fff;
    border-color: #ececec;
    border-left-color: #444;
}

.diag {
    position: relative;
    padding: 0;
}

.diag svg {
    position: absolute;
    left: 0;
    top: 0;
    width: 100%;
    height: 100%;
}

.data th {
    background: #e2e0e0;
    color: #5b8073;
}

.data td {
    background: #c8c5c6;
    border: 1px solid #4a4a4a;
    text-align: right;
}

.data td.area {
    background: #dbe3f9;
    text-align: left;
    padding-left: 4px;
    font-size: 18px;
    color: #555;
    border-left: 2px solid #217a5a;
    border-right: 2px solid #217a5a;
}

.data td.active {
    background: #fff;
}

.data td.plain {
    background: #fff;
    border: 1px solid #ececec;
    border-left: 2px solid #217a5a;
}

.first td {
    border-top: 2px solid #217a5a !important;
}

.first td.plain {
    border-top-color: #ececec !important;
}

.last td {
    border-bottom: 2px solid #217a5a !important;
}

.last td.plain {
    border-bottom-color: #ececec !important;
}

/* Overlays */
.red-box {
    position: absolute;
    left: 868px;
    top: 56px;
    width: 62px;
    height: 93px;
    border: 8px solid #d5400f;
    border-top-width: 7px;
}

.menu {
    position: absolute;
    background: #fff;
    border: 1px solid #b5b5b5;
    box-shadow: 1px 2px 4px rgba(0, 0, 0, 0.2);
    font-size: 10.5px;
    font-weight: 700;
    letter-spacing: -0.2px;
    color: #444;
}

.menu-main {
    left: 879px;
    top: 142px;
    width: 182px;
    height: 266px;
}

.menu-sub {
    left: 1060px;
    top: 143px;
    width: 179px;
    height: 289px;
    padding-top: 4px;
}

.m-item {
    display: flex;
    align-items: center;
    white-space: nowrap;
}

.m-item u {
    text-underline-offset: 1px;
}

.tall {
    height: 37.4px;
    padding-left: 12px;
}

.tall:first-child {
    height: 39px;
}

.sub {
    height: 36.8px;
    padding-left: 12px;
}

.hover {
    background: #f6f6f6;
}

.m-ic {
    width: 28px;
    height: 24px;
    flex: none;
    margin-right: 4px;
}

.s-ic {
    width: 16px;
    height: 14px;
    flex: none;
    margin-right: 7px;
}

.small {
    height: 24.5px;
    padding-left: 9px;
    font-weight: 400;
    font-size: 10px;
    color: #666;
}

.arrow {
    position: absolute;
    right: 7px;
    font-size: 17px;
    font-weight: 400;
    color: #555;
}

.m-sep {
    height: 1px;
    background: #e4e4e4;
}

.m-sep.inset {
    margin-left: 38px;
}

.m-num {
    font-family: "Noto Sans", sans-serif;
    font-size: 8px;
    font-weight: 400;
    fill: #555;
}

.m-more {
    padding-top: 5px;
    text-align: center;
    font-weight: 400;
    font-size: 10px;
    color: #666;
}

.cursor {
    position: absolute;
    left: 48px;
    top: 26px;
}

.pointer {
    position: absolute;
    left: 762px;
    top: 193px;
}

.callout {
    position: absolute;
    left: 76px;
    top: 485px;
    width: 1005px;
    height: 114px;
    padding-left: 26px;
    line-height: 108px;
    background: #137a43;
    border-radius: 20px;
    font-size: 60px;
    font-weight: 700;
    letter-spacing: 2.5px;
    color: #fff;
    white-space: nowrap;
}

.gt {
    margin: 0 15px;
    font-weight: 400;
    letter-spacing: 0;
    font-feature-settings: normal;
}
```
